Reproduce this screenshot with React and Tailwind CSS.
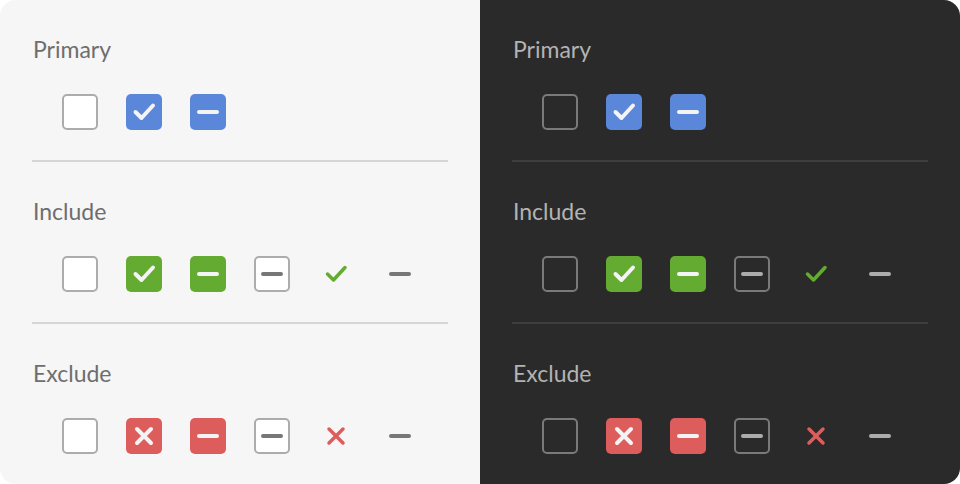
import React from "react";

const Check = ({ color = "#f4f4f4", w = 4 }) => (
  <svg width="36" height="36" viewBox="0 0 36 36" fill="none">
    <path d="M9.5 18 L15.5 24 L27 11.5" stroke={color} strokeWidth={w} strokeLinecap="round" strokeLinejoin="round" />
  </svg>
);
const Dash = ({ color = "#f4f4f4" }) => (
  <svg width="36" height="36" viewBox="0 0 36 36" fill="none">
    <path d="M9 18 L27 18" stroke={color} strokeWidth="4" strokeLinecap="round" />
  </svg>
);
const Cross = ({ color = "#f4f4f4", w = 4 }) => (
  <svg width="36" height="36" viewBox="0 0 36 36" fill="none">
    <path d="M11 11 L25 25 M25 11 L11 25" stroke={color} strokeWidth={w} strokeLinecap="round" />
  </svg>
);

function Box({ kind, bg, dark, children }) {
  if (kind === "empty") {
    return (
      <div className={`w-9 h-9 rounded-[5px] border-2 flex items-center justify-center ${dark ? "border-[#7a7a7a] bg-transparent" : "border-[#acacac] bg-white"}`}>
        <div className="-m-[2px]">{children}</div>
      </div>
    );
  }
  if (kind === "plain") {
    return <div className="w-9 h-9 flex items-center justify-center">{children}</div>;
  }
  return (
    <div className={`w-9 h-9 rounded-[5px] flex items-center justify-center ${bg}`}>{children}</div>
  );
}

function Section({ title, dark, items, last }) {
  return (
    <div className={`${last ? "" : "border-b-2"} ${dark ? "border-[#3e3e3e]" : "border-[#d6d6d6]"} pb-[30px]`}>
      <div
        className={`text-[23px] leading-[28px] pl-px mt-px ${dark ? "text-[#b3b3b3]" : "text-[#6e6e6e]"}`}
        style={{ fontFamily: "Lato, 'Open Sans', sans-serif" }}
      >
        {title}
      </div>
      <div className="flex gap-7 pl-[30px] mt-[31px]">{items}</div>
    </div>
  );
}

function Panel({ dark }) {
  const blue = "bg-[#5b87db]";
  const green = "bg-[#63ab31]";
  const red = "bg-[#dd5d5d]";
  const gray = dark ? "#acacac" : "#777777";
  const mk = (arr) => arr.map((el, i) => <React.Fragment key={i}>{el}</React.Fragment>);
  return (
    <div className={`flex-1 h-full px-8 pt-[34px] ${dark ? "bg-[#2a2a2a] rounded-r-[16px]" : "bg-[#f6f6f6] rounded-l-[16px]"}`}>
      <div className="flex flex-col gap-[34px]">
        <Section
          title="Primary"
          dark={dark}
          items={mk([
            <Box kind="empty" dark={dark} />,
            <Box bg={blue}><Check /></Box>,
            <Box bg={blue}><Dash /></Box>,
          ])}
        />
        <Section
          title="Include"
          dark={dark}
          items={mk([
            <Box kind="empty" dark={dark} />,
            <Box bg={green}><Check /></Box>,
            <Box bg={green}><Dash /></Box>,
            <Box kind="empty" dark={dark}><Dash color={gray} /></Box>,
            <Box kind="plain"><Check color="#63ab31" w={3.5} /></Box>,
            <Box kind="plain"><Dash color={gray} /></Box>,
          ])}
        />
        <Section
          title="Exclude"
          dark={dark}
          last
          items={mk([
            <Box kind="empty" dark={dark} />,
            <Box bg={red}><Cross /></Box>,
            <Box bg={red}><Dash /></Box>,
            <Box kind="empty" dark={dark}><Dash color={gray} /></Box>,
            <Box kind="plain"><Cross color="#dd5d5d" w={3.5} /></Box>,
            <Box kind="plain"><Dash color={gray} /></Box>,
          ])}
        />
      </div>
    </div>
  );
}

export default function App() {
  return (
    <div className="w-[960px] h-[484px] bg-white flex overflow-hidden">
      <Panel />
      <Panel dark />
    </div>
  );
}
